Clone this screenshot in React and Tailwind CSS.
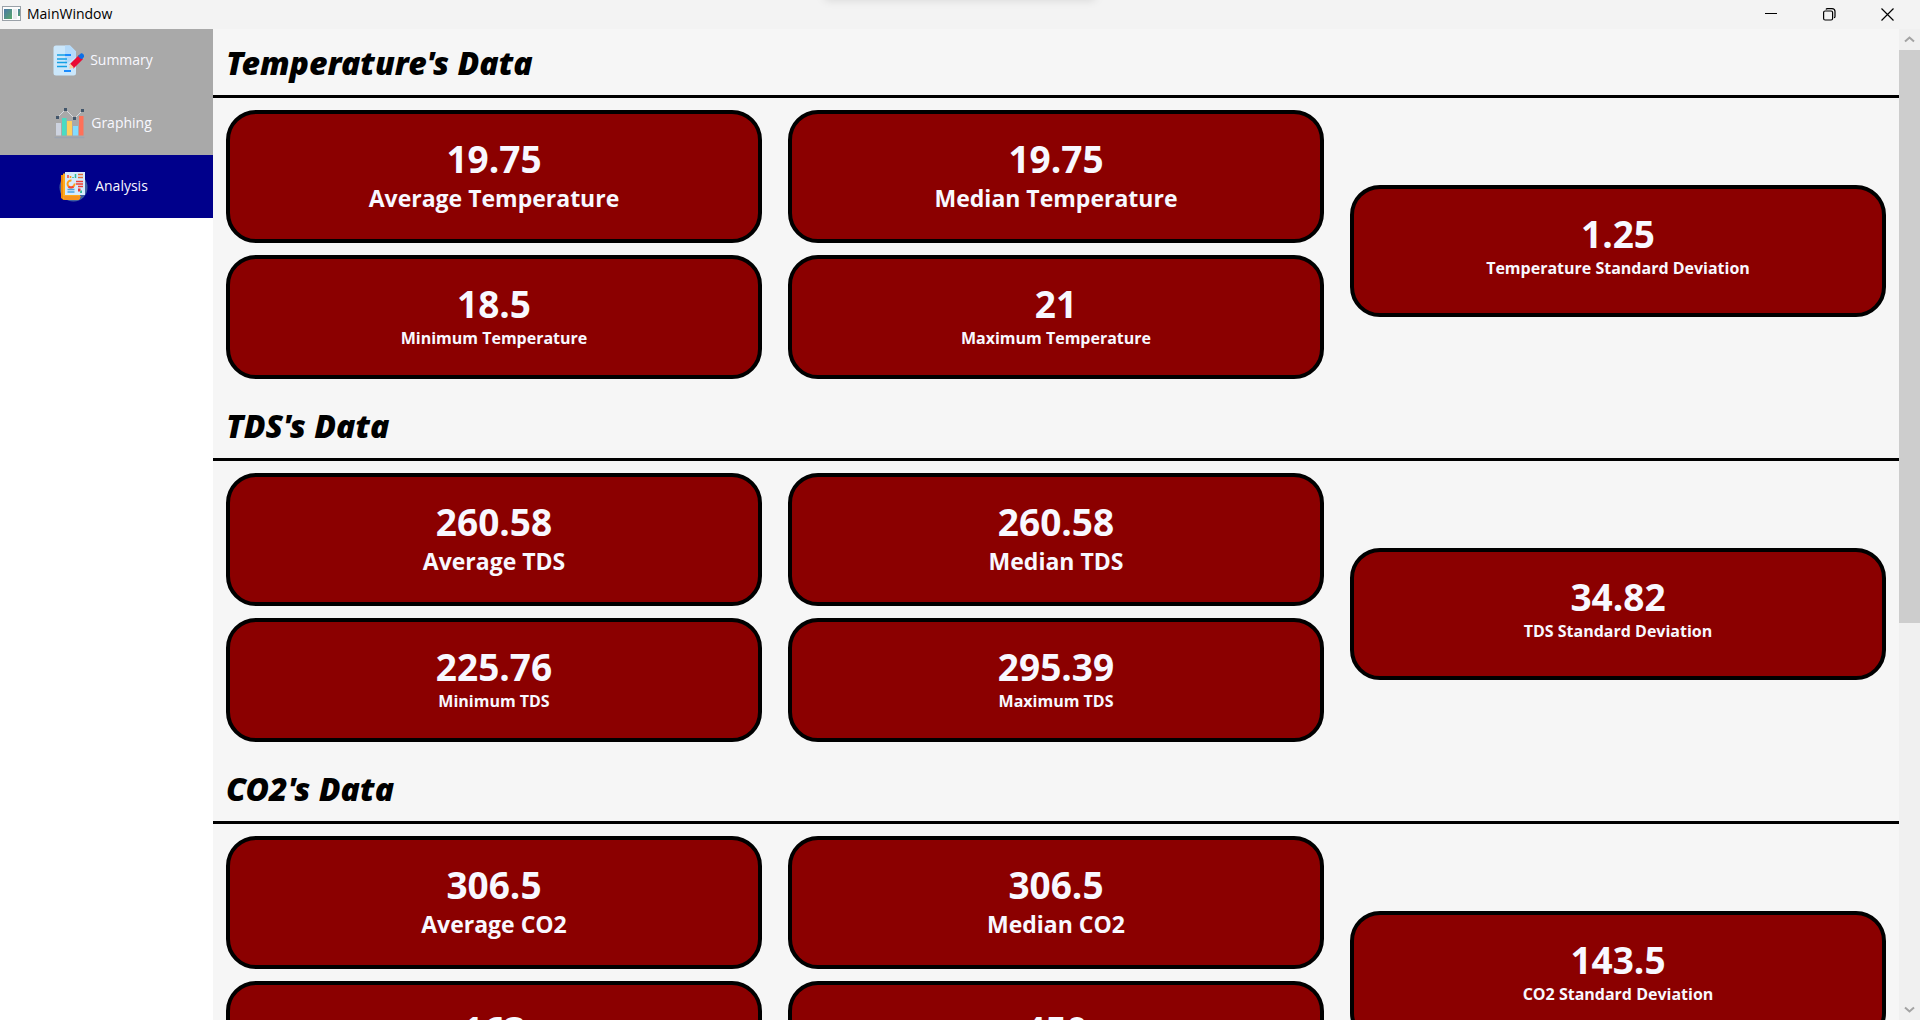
const sections = [
  {
    title: "Temperature's Data",
    name: "Temperature",
    average: "19.75",
    median: "19.75",
    minimum: "18.5",
    maximum: "21",
    deviation: "1.25",
  },
  {
    title: "TDS's Data",
    name: "TDS",
    average: "260.58",
    median: "260.58",
    minimum: "225.76",
    maximum: "295.39",
    deviation: "34.82",
  },
  {
    title: "CO2's Data",
    name: "CO2",
    average: "306.5",
    median: "306.5",
    minimum: "163",
    maximum: "450",
    deviation: "143.5",
  },
];

function SummaryIcon() {
  return (
    <svg width="31" height="31" viewBox="0 0 31 31" aria-hidden="true">
      <path d="M3 0.5H17L23 6.5V28a2.5 2.5 0 0 1-2.5 2.5H3A2.5 2.5 0 0 1 0.5 28V3A2.5 2.5 0 0 1 3 0.5Z" fill="#cbe7fb" />
      <path d="M12 0.5H17L23 6.5V12L12 20Z" fill="#b4dafa" />
      <path d="M4 10h14M4 14h10M4 17.5h10M4 21.5h10" stroke="#14a0e4" strokeWidth="1.6" />
      <path d="M12 10h6M11 26h7" stroke="#1a8cff" strokeWidth="2" />
      <path d="M17.5 19.5L26 11l3 3-8.5 8.5Z" fill="#ea0a34" stroke="#ea0a34" strokeWidth="1.5" />
      <path d="M17 18.5l4 4-4.7 1.4Z" fill="#fbcfa0" />
      <path d="M25.5 11l1.6-1.6a2.1 2.1 0 0 1 3 3L28.5 14Z" fill="#0b6fe8" stroke="#0b6fe8" />
    </svg>
  );
}

function GraphingIcon() {
  return (
    <svg width="31" height="31" viewBox="0 0 31 31" aria-hidden="true">
      <path d="M0.5 29.5h30" stroke="#9aa3b0" strokeWidth="1.5" />
      <rect x="2" y="15" width="5" height="12.5" fill="#cdd3e0" />
      <rect x="8" y="10" width="4.5" height="17.5" fill="#49dcc2" />
      <rect x="13" y="13" width="5" height="14.5" fill="#ffcf5c" />
      <rect x="19" y="18" width="5" height="9.5" fill="#82dcff" />
      <rect x="25" y="8" width="4.5" height="19.5" fill="#ff7058" />
      <path d="M3.5 9.5L11.5 1.5L20.5 10.5L28.5 2.5" fill="none" stroke="#d5d9e0" strokeWidth="1" />
      <path d="M2 8h3v3H2zM10 0h3v3h-3zM19 9h3v3h-3zM27 1h3v3h-3z" fill="#42566b" />
    </svg>
  );
}

function AnalysisIcon() {
  return (
    <svg width="31" height="31" viewBox="0 0 31 31" aria-hidden="true">
      <circle cx="15.5" cy="16.5" r="14" fill="#3f5fa0" />
      <path d="M3 4h16v25H5.5L3 27Z" fill="#ef8a0c" />
      <path d="M5 2.5h17v25.5H5Z" fill="#ffab1c" />
      <path d="M5 25h18l-2 4H7Z" fill="#f7931e" />
      <rect x="7" y="1" width="20" height="23" fill="#d7ebfc" />
      <path d="M10 7V4" stroke="#f44336" strokeWidth="1.5" />
      <path d="M12.5 7V5" stroke="#ff9d17" strokeWidth="1.5" />
      <path d="M15 7V6M17.5 7V3" stroke="#31b89c" strokeWidth="1.5" />
      <path d="M20 3.5h5M20 6.5h5" stroke="#e2703a" strokeWidth="1.3" />
      <path d="M16.5 12.5a3.5 3.5 0 1 1-3-3" fill="none" stroke="#ff9d17" strokeWidth="2" />
      <path d="M10.5 15.5a3.5 3.5 0 0 0 5 0" fill="none" stroke="#f44336" strokeWidth="2" />
      <path d="M18 10.5h7M18 13h7M20 15.5h5" stroke="#ee4035" strokeWidth="1.3" />
      <path d="M9.5 18.5h7M9.5 21h7" stroke="#4aa3df" strokeWidth="1.5" />
      <path d="M20 17.5h2.5v3H20z" fill="#e53935" />
      <path d="M22.5 19.5H24V22h-2z" fill="#31b89c" />
    </svg>
  );
}

const navItems = [
  { label: "Summary", Icon: SummaryIcon },
  { label: "Graphing", Icon: GraphingIcon },
  { label: "Analysis", Icon: AnalysisIcon, active: true },
];

function TitleBar() {
  return (
    <header className="relative flex h-[29px] shrink-0 items-center overflow-hidden bg-[#f3f3f3] pr-1 pb-px pl-0.5">
      <div className="absolute -top-2 left-1/2 h-2 w-[272px] -translate-x-1/2 rounded-lg shadow-[0_0_10px_rgba(0,0,0,0.13)]" />
      <svg width="20" height="16" viewBox="0 0 20 16" aria-hidden="true">
        <defs>
          <linearGradient id="pane" x1="0" y1="0" x2="1" y2="1">
            <stop offset="0" stopColor="#4a78a8" />
            <stop offset="1" stopColor="#58a868" />
          </linearGradient>
        </defs>
        <rect x="0.5" y="0.5" width="18" height="14" fill="#fdfdfd" stroke="#9aa1a8" />
        <rect x="2" y="3" width="8" height="10" fill="url(#pane)" />
        <rect x="11" y="3" width="4" height="10" fill="#e9ecee" />
        <rect x="16" y="3" width="2" height="7" fill="url(#pane)" />
      </svg>
      <span className="ml-[5px] text-sm text-black">MainWindow</span>
      <div className="ml-auto flex h-full">
        <button type="button" aria-label="Minimize" className="flex w-[58px] items-center justify-center">
          <svg width="13" height="13" viewBox="0 0 13 13"><path d="M0 5.5h12" stroke="#000" /></svg>
        </button>
        <button type="button" aria-label="Restore" className="flex w-[58px] items-center justify-center">
          <svg width="13" height="13" viewBox="0 0 13 13" fill="none" stroke="#000" strokeWidth="1.2">
            <rect x="0.6" y="3" width="9" height="9" rx="1.5" />
            <path d="M3 1.5Q3.3 0.6 4.5 0.6H9a3 3 0 0 1 3 3V8.5Q12 9.5 11 9.8" />
          </svg>
        </button>
        <button type="button" aria-label="Close" className="flex w-[58px] items-center justify-center">
          <svg width="13" height="13" viewBox="0 0 13 13"><path d="M0.5 0.5l12 12M12.5 0.5l-12 12" stroke="#000" strokeWidth="1.2" /></svg>
        </button>
      </div>
    </header>
  );
}

function Sidebar() {
  return (
    <nav className="w-[213px] shrink-0 bg-white">
      {navItems.map(({ label, Icon, active }) => (
        <button
          key={label}
          type="button"
          className={`flex h-[63px] w-full items-center justify-center gap-1.5 pr-[7px] pb-px text-sm text-[#f8f8ff] ${
            active ? "bg-[#00008b]" : "bg-[#a9a9a9]"
          }`}
        >
          <Icon />
          {label}
        </button>
      ))}
    </nav>
  );
}

const cardSizes = {
  large: { box: "pb-[26px]", label: "text-[23px] leading-[30px]" },
  small: { box: "pb-[26px]", label: "text-base leading-[21px]" },
  tall: { box: "pb-[34px]", label: "text-base leading-[21px]" },
};

function Card({ value, label, size }) {
  return (
    <div className={`rounded-[30px] border-4 border-black bg-[#8b0000] px-4 pt-[21px] text-center font-bold text-[#f8f8ff] ${cardSizes[size].box}`}>
      <p className="text-[37px] leading-[48px]">{value}</p>
      <p className={cardSizes[size].label}>{label}</p>
    </div>
  );
}

function DataSection({ data }) {
  return (
    <section>
      <h2 className="flex h-[69px] items-center border-b-[3px] border-black px-[13px] pt-0.5 font-['Noto_Sans',sans-serif] text-[32px] leading-10 font-black text-black italic">
        {data.title}
      </h2>
      <div className="grid grid-cols-3 pt-3">
        <div className="flex flex-col gap-3 px-[13px] pb-[13px]">
          <Card value={data.average} label={`Average ${data.name}`} size="large" />
          <Card value={data.minimum} label={`Minimum ${data.name}`} size="small" />
        </div>
        <div className="flex flex-col gap-3 px-[13px] pb-[13px]">
          <Card value={data.median} label={`Median ${data.name}`} size="large" />
          <Card value={data.maximum} label={`Maximum ${data.name}`} size="small" />
        </div>
        <div className="flex flex-col justify-center px-[13px]">
          <Card value={data.deviation} label={`${data.name} Standard Deviation`} size="tall" />
        </div>
      </div>
    </section>
  );
}

function ScrollBar() {
  return (
    <div className="flex w-[21px] shrink-0 flex-col bg-[#f0f0f0]">
      <button type="button" aria-label="Scroll up" className="flex h-[21px] items-center justify-center">
        <svg width="11" height="7" viewBox="0 0 11 7" fill="none"><path d="M1 5.5L5.5 1.5L10 5.5" stroke="#a3a3a3" strokeWidth="2" /></svg>
      </button>
      <div className="flex-[573] bg-[#cdcdcd]" />
      <div className="flex-[376]" />
      <button type="button" aria-label="Scroll down" className="flex h-[21px] items-center justify-center">
        <svg width="11" height="7" viewBox="0 0 11 7" fill="none"><path d="M1 1.5L5.5 5.5L10 1.5" stroke="#a3a3a3" strokeWidth="2" /></svg>
      </button>
    </div>
  );
}

export default function App() {
  return (
    <div className="flex h-screen flex-col overflow-hidden bg-white font-['Segoe_UI','Open_Sans','Noto_Sans',sans-serif]">
      <TitleBar />
      <div className="flex min-h-0 flex-1">
        <Sidebar />
        <main className="min-w-0 flex-1 overflow-hidden bg-[#f6f6f6]">
          {sections.map((data) => (
            <DataSection key={data.name} data={data} />
          ))}
        </main>
        <ScrollBar />
      </div>
    </div>
  );
}
